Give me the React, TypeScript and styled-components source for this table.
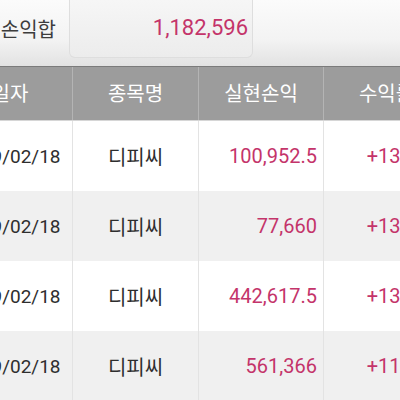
import React from "react";
import styled, { createGlobalStyle } from "styled-components";

const GlobalStyle = createGlobalStyle`
  html, body { margin: 0; padding: 0; background: #ffffff; }
  body { width: 400px; height: 400px; overflow: hidden; font-family: Roboto, "Noto Sans CJK KR", sans-serif; }
`;

const Page = styled.div`
  width: 400px;
  height: 400px;
  overflow: hidden;
`;

const Sheet = styled.div`
  margin-left: -52px;
  width: 502px;
`;

const SummaryBar = styled.div`
  display: flex;
  height: 66px;
  background: linear-gradient(#fbfbfb 0%, #f3f3f3 60%, #e2e2e2 100%);
  border-bottom: 1px solid #7b7b7b;
`;

const SummaryLabel = styled.div`
  width: 121px;
  height: 56px;
  box-sizing: border-box;
  padding-right: 13px;
  display: flex;
  align-items: center;
  justify-content: flex-end;
  font-family: Roboto, "Noto Sans CJK KR", sans-serif;
  font-size: 20px;
  color: #3d3d3d;
  white-space: nowrap;
  overflow: hidden;
`;

const SummaryValue = styled.div`
  width: 184px;
  height: 58px;
  box-sizing: border-box;
  padding-right: 4px;
  text-align: right;
  background: linear-gradient(#f6f6f6, #ececec);
  border: 1px solid #dedede;
  border-top: none;
  border-radius: 0 0 6px 6px;
  font-size: 22px;
  line-height: 56px;
  color: #c4346a;
`;

const cols = "125px 126px 125px 126px";

const HeaderRow = styled.div`
  display: grid;
  grid-template-columns: ${cols};
  height: 53px;
  background: #9c9c9c;
  border-bottom: 1px solid #d6d6d6;
`;

const HeaderCell = styled.div`
  display: flex;
  align-items: center;
  justify-content: center;
  padding-bottom: 3px;
  color: #ffffff;
  font-family: Roboto, "Noto Sans CJK KR", sans-serif;
  font-size: 20px;
  border-right: 1px solid #b4b4b4;
`;

const DataRow = styled.div<{ $shade: boolean }>`
  display: grid;
  grid-template-columns: ${cols};
  height: 70px;
  background: ${(p) => (p.$shade ? "#f0f0f0" : "#ffffff")};
`;

const Cell = styled.div<{ $align: "center" | "right"; $tone: "dark" | "pink"; $size: number }>`
  display: flex;
  align-items: center;
  justify-content: ${(p) => (p.$align === "center" ? "center" : "flex-end")};
  padding-right: ${(p) => (p.$align === "right" ? "6px" : "0")};
  box-sizing: border-box;
  border-right: 1px solid #e3e3e3;
  font-family: Roboto, "Noto Sans CJK KR", sans-serif;
  font-size: ${(p) => p.$size}px;
  color: ${(p) => (p.$tone === "pink" ? "#c4346a" : "#2e2e2e")};
  white-space: nowrap;
  overflow: hidden;
`;

const rows = [
  { date: "2019/02/18", name: "디피씨", pnl: "100,952.5", rate: "+13.52%" },
  { date: "2019/02/18", name: "디피씨", pnl: "77,660", rate: "+13.48%" },
  { date: "2019/02/18", name: "디피씨", pnl: "442,617.5", rate: "+13.55%" },
  { date: "2019/02/18", name: "디피씨", pnl: "561,366", rate: "+11.87%" },
];

export default function App() {
  return (
    <>
      <GlobalStyle />
      <Page>
        <Sheet>
          <SummaryBar>
            <SummaryLabel>손익합</SummaryLabel>
            <SummaryValue>1,182,596</SummaryValue>
          </SummaryBar>
          <HeaderRow>
            <HeaderCell>일자</HeaderCell>
            <HeaderCell>종목명</HeaderCell>
            <HeaderCell>실현손익</HeaderCell>
            <HeaderCell>수익률</HeaderCell>
          </HeaderRow>
          {rows.map((r, i) => (
            <DataRow key={i} $shade={i % 2 === 1}>
              <Cell $align="center" $tone="dark" $size={19}>{r.date}</Cell>
              <Cell $align="center" $tone="dark" $size={20}>{r.name}</Cell>
              <Cell $align="right" $tone="pink" $size={20}>{r.pnl}</Cell>
              <Cell $align="right" $tone="pink" $size={20}>{r.rate}</Cell>
            </DataRow>
          ))}
        </Sheet>
      </Page>
    </>
  );
}
